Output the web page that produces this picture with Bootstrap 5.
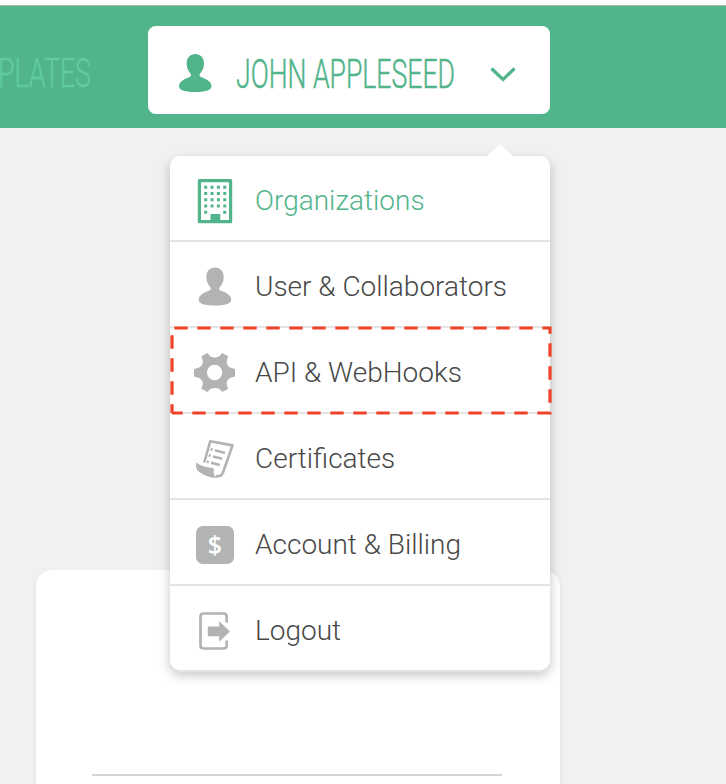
<!DOCTYPE html>
<html lang="en">
<head>
<meta charset="utf-8">
<meta name="viewport" content="width=device-width, initial-scale=1">
<title>Account menu</title>
<link href="https://cdn.jsdelivr.net/npm/bootstrap@5.3.0/dist/css/bootstrap.min.css" rel="stylesheet">
<style>
  body { background: #f1f1f1; font-family: Roboto, "Open Sans", sans-serif; height: 784px; }
  .topbar { height: 128px; background: #52b48a; border-top: 5px solid #fff; box-shadow: inset 0 1px #a9b5af; }
  .nav-label { width: 148px; }
  .user-toggle { width: 402px; height: 88px; margin-top: 7px; border-radius: 8px; color: #52b48a; padding-left: 31px; }
  .user-icon { margin-top: 5px; }
  .user-name { margin-left: 24px; }
  .chevron { margin-left: 34px; margin-top: 7px; }
  .account-menu { left: 170px; top: 156px; width: 380px; z-index: 10; }
  .menu-panel { border-radius: 10px; box-shadow: 0 2px 0 #e4e4e4, 0 5px 12px rgba(0,0,0,.24); overflow: hidden; }
  .menu-panel .list-group-item { height: 86px; border: 0; border-bottom: 2px solid #e4e4e4; padding: 6px 0 0 22px; color: #484848; font-size: 28px; font-weight: 300; line-height: 1; }
  .menu-panel .list-group-item:last-child { height: 84px; border-bottom: 0; }
  .menu-panel .list-group-item.current { color: #52b48a; }
  .menu-icon { width: 46px; height: 46px; margin-right: 17px; color: #b1b4b3; }
  .current .menu-icon { color: #52b48a; }
  .menu-caret { left: 317px; top: -12px; }
  .callout-box { left: -2px; top: 166px; }
  .content-card { margin: 442px 0 0 36px; width: 524px; height: 214px; border-radius: 16px 16px 0 0; padding: 204px 58px 0 56px; box-shadow: 0 2px 5px rgba(0,0,0,.08); }
  .rule-line { height: 2px; background: #d5d5d5; }
</style>
</head>
<body class="position-relative overflow-hidden">
  <header class="topbar d-flex align-items-center">
    <div class="nav-label flex-shrink-0">
      <svg class="d-block overflow-visible" width="100" height="60" fill="#60cc9b" stroke="#60cc9b" stroke-width=".5" font-family="Roboto" font-weight="300" font-size="41">
        <text x="-2" y="50" textLength="93" lengthAdjust="spacingAndGlyphs">PLATES</text>
      </svg>
    </div>
    <div class="user-toggle bg-white d-flex align-items-center" role="button">
      <svg class="user-icon" width="33" height="40" viewBox="0 0 33 40" fill="currentColor" aria-hidden="true"><path d="M16.300 1c-5 0-8.600 3.500-8.600 9.200 0 4.900 1.700 8.200 4.400 11.200.2 1.400-.6 2.300-2.600 3.200C4.500 26.500 0 28.800 0 33.300c0 4.400 7 5.700 16.300 5.700s16.200-1.300 16.200-5.700c0-4.500-4.500-6.800-9.400-8.700-2-.9-2.800-1.800-2.600-3.200 2.700-3 4.500-6.300 4.500-11.200C25 4.500 21.300 1 16.300 1Z"/></svg>
      <svg class="user-name overflow-visible" width="220" height="60" fill="currentColor" stroke="currentColor" stroke-width=".5" font-family="Roboto" font-weight="300" font-size="41">
        <text x="0" y="48" textLength="219" lengthAdjust="spacingAndGlyphs">JOHN APPLESEED</text>
      </svg>
      <svg class="chevron" width="26" height="18" fill="none" stroke="currentColor" stroke-width="3.200" aria-hidden="true"><path d="M1.500 3.500 13 14.500l11.500-11"/></svg>
    </div>
  </header>

  <div class="account-menu position-absolute">
    <div class="list-group menu-panel bg-white">
      <a class="list-group-item current d-flex align-items-center" href="#">
        <svg class="menu-icon" viewBox="0 0 46 46" fill="currentColor"><path fill-rule="evenodd" d="M7.300 1h31.400q1.500 0 1.500 1.500v41.200q0 1.500-1.500 1.500H7.300q-1.500 0-1.500-1.500V2.500Q5.800 1 7.300 1ZM9 4.300v37.800h9.500V36h9.800v6.100H37V4.300Z"/><path stroke="currentColor" stroke-width="3" stroke-dasharray="3 3.350" fill="none" d="M12.200 9.200h24M12.200 15.500h24M12.200 21.800h24M12.200 28.100h24M12.200 34.300h3M31.200 34.300h3"/></svg>
        <span>Organizations</span>
      </a>
      <a class="list-group-item d-flex align-items-center" href="#">
        <svg class="menu-icon" viewBox="0 0 46 46" fill="currentColor"><path transform="translate(6.700 2.500)" d="M16.300 1c-5 0-8.600 3.500-8.600 9.200 0 4.900 1.700 8.200 4.400 11.200.2 1.400-.6 2.300-2.600 3.200C4.500 26.500 0 28.800 0 33.300c0 4.400 7 5.700 16.300 5.700s16.200-1.300 16.200-5.700c0-4.500-4.500-6.800-9.400-8.700-2-.9-2.800-1.800-2.600-3.200 2.700-3 4.500-6.300 4.500-11.200C25 4.500 21.300 1 16.300 1Z"/></svg>
        <span>User &amp; Collaborators</span>
      </a>
      <a class="list-group-item d-flex align-items-center" href="#">
        <svg class="menu-icon" viewBox="0 0 46 46" fill="currentColor"><path fill-rule="evenodd" d="M9.300 6.300 15.700 3Q18 7.500 22.800 7.500T30 3L36.300 6.300Q31 17 43 19v7.500Q31 28.500 36.300 38.800L30.300 42Q27.800 38 22.800 38T15.700 42L9.300 38.800Q14.500 28.500 2 26.500V19Q14.500 17 9.300 6.300ZM22.600 14.800a7.700 7.700 0 1 0 0 15.400 7.700 7.700 0 0 0 0-15.400Z"/></svg>
        <span>API &amp; WebHooks</span>
      </a>
      <a class="list-group-item d-flex align-items-center" href="#">
        <svg class="menu-icon" viewBox="0 0 46 46" fill="none" stroke="currentColor" stroke-width="2.600"><path d="M12.200 26.500 18.300 5.200 40.500 9.400 31 36.500q-1.800 4.500-7 3.500" stroke-linejoin="round"/><path fill="currentColor" stroke="none" d="M4 26.500q5 4 14.500 5.300 3-.2 3.400 1.800-1.300 6.300 3.500 7.600-3 1.400-8.400-.5Q4.500 37 4 30.500Z"/><path d="M23 14.200l10 2.700M21 20.400l9.300 2.400M19 26.700l8.800 2.300M18.700 13.200l2 .6M16.700 19.200l2 .6M14.800 25.600l2 .6"/></svg>
        <span>Certificates</span>
      </a>
      <a class="list-group-item d-flex align-items-center" href="#">
        <svg class="menu-icon" viewBox="0 0 46 46"><rect x="4" y="4" width="38" height="38" rx="7" fill="currentColor"/><text x="22.800" y="32" text-anchor="middle" font-family="Open Sans" font-weight="600" font-size="25" fill="#fff">$</text></svg>
        <span>Account &amp; Billing</span>
      </a>
      <a class="list-group-item d-flex align-items-center" href="#">
        <svg class="menu-icon" viewBox="0 0 46 46" fill="none" stroke="currentColor" stroke-width="2.700"><path d="M34.600 14.500V8.500q0-3-3-3H11.500q-3 0-3 3v29q0 3 3 3h20.100q3 0 3-3v-5"/><path fill="currentColor" stroke="none" d="M17 18.500h10.200v-5.300L38 23.500 27.200 33.800v-5.600H17q-1.200 0-1.200-1.200v-7.300q0-1.200 1.200-1.200Z"/></svg>
        <span>Logout</span>
      </a>
    </div>
    <svg class="menu-caret position-absolute" width="26" height="13" fill="#fff"><path d="M0 12 13 0l13 12v1H0Z"/></svg>
    <svg class="callout-box position-absolute" width="388" height="96" fill="none" stroke="#ee4328" stroke-width="3.200"><path d="M4 91V6H382V91H4" stroke-dasharray="13.400 9.600" stroke-dashoffset="4.700"/></svg>
  </div>

  <main class="content-card bg-white">
    <div class="rule-line"></div>
  </main>
<script src="https://cdn.jsdelivr.net/npm/bootstrap@5.3.0/dist/js/bootstrap.bundle.min.js"></script>
</body>
</html>
